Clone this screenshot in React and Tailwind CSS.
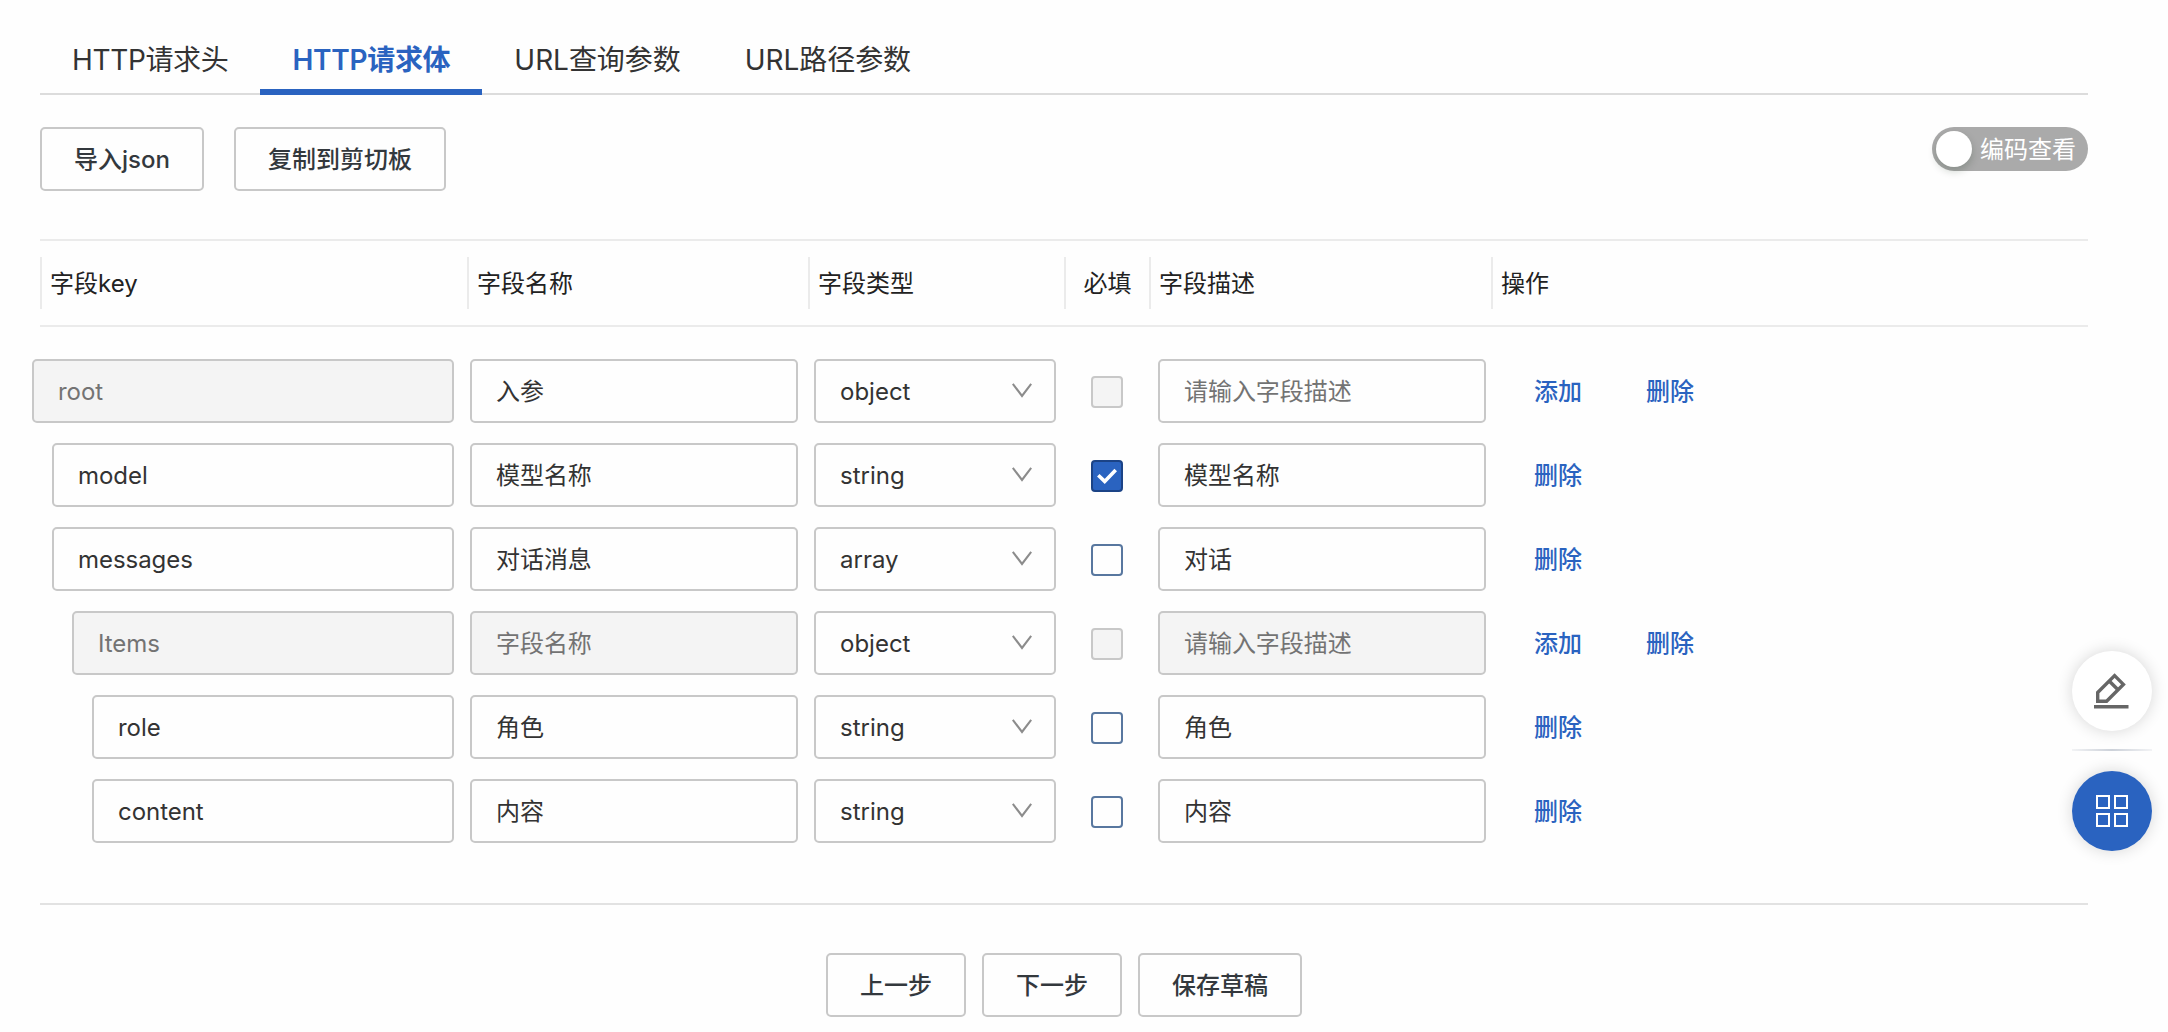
import React, { useState } from 'react';
import clsx from 'clsx';

const TABS = [
    { title: 'HTTP请求头', className: 'tracking-[-0.35px]' },
    { title: 'HTTP请求体', className: 'tracking-[-0.28px]' },
    { title: 'URL查询参数', className: 'tracking-[-0.05px]' },
    { title: 'URL路径参数', className: 'tracking-[-0.05px]' },
];

const COLUMNS = [
    { title: '字段key', className: 'w-[427px] pl-2' },
    { title: '字段名称', className: 'w-[341px] pl-2' },
    { title: '字段类型', className: 'w-[256px] pl-2' },
    { title: '必填', className: 'w-[85px] justify-center' },
    { title: '字段描述', className: 'w-[342px] pl-2' },
    { title: '操作', className: 'flex-1 pl-2' },
];

const FIELDS = [
    { id: 1, key: 'root', name: '入参', type: 'object', desc: '', level: 0, lockKey: true, lockRequired: true, canAdd: true },
    { id: 2, key: 'model', name: '模型名称', type: 'string', desc: '模型名称', level: 1, required: true },
    { id: 3, key: 'messages', name: '对话消息', type: 'array', desc: '对话', level: 1 },
    { id: 4, key: 'Items', name: '', type: 'object', desc: '', level: 2, lockKey: true, lockName: true, lockDesc: true, lockRequired: true, canAdd: true },
    { id: 5, key: 'role', name: '角色', type: 'string', desc: '角色', level: 3 },
    { id: 6, key: 'content', name: '内容', type: 'string', desc: '内容', level: 3 },
];

// each nesting level moves the key input 20px to the right
const INDENT = ['ml-0', 'ml-5', 'ml-10', 'ml-15'];

function Button({ children }) {
    return (
        <button
            type="button"
            className="h-16 px-8 pt-px border-2 border-[#c8c8c8] rounded-[5px] bg-[#fefefe] font-medium text-[#33383d]"
        >
            {children}
        </button>
    );
}

function TextInput({ value, placeholder, disabled, className, onChange }) {
    return (
        <input
            type="text"
            value={value}
            placeholder={placeholder}
            disabled={disabled}
            onChange={(e) => onChange(e.target.value)}
            className={clsx(
                'h-16 min-w-0 px-6 border-2 border-[#c8c8c8] rounded-[5px] outline-none tracking-[-0.05px] placeholder:text-[#737373] placeholder:opacity-100',
                disabled ? 'bg-[#f4f4f4] text-[#737373]' : 'bg-[#fefefe] text-[#333]',
                className,
            )}
        />
    );
}

function TypeSelect({ value }) {
    return (
        <div className="flex items-center justify-between w-[242px] h-16 pl-6 pr-[22px] border-2 border-[#c8c8c8] rounded-[5px] bg-[#fefefe] text-[#333]">
            <span className="pt-px">{value}</span>
            <svg width="20" height="15" viewBox="0 0 20 15" fill="none" className="-mt-0.5">
                <path d="M0.8 0.8L10 13L19.2 0.8" stroke="#8c8c8c" strokeWidth="2.1" />
            </svg>
        </div>
    );
}

function Checkbox({ checked, disabled, onToggle }) {
    return (
        <button
            type="button"
            disabled={disabled}
            onClick={onToggle}
            className={clsx(
                'flex items-center justify-center size-8 border-2 rounded-[4px]',
                disabled && 'bg-[#f4f4f4] border-[#c8c8c8]',
                !disabled && checked && 'bg-[#2a63c0] border-[#1b4386]',
                !disabled && !checked && 'bg-[#fefefe] border-[#58779f]',
            )}
        >
            {checked && (
                <svg width="20" height="16" viewBox="0 0 20 16" fill="none">
                    <path d="M1.3 7.2L7.7 13.4L18.7 2" stroke="#fff" strokeWidth="3.6" />
                </svg>
            )}
        </button>
    );
}

function FieldRow({ field, onUpdate }) {
    return (
        <div className="flex items-center h-16">
            <div className="flex w-[422px]">
                <TextInput
                    value={field.key}
                    disabled={field.lockKey}
                    className={clsx('flex-1', INDENT[field.level])}
                    onChange={(key) => onUpdate({ key })}
                />
            </div>
            <TextInput
                value={field.name}
                placeholder="字段名称"
                disabled={field.lockName}
                className={clsx('w-[328px] mx-4', field.name && 'pb-[3px]')}
                onChange={(name) => onUpdate({ name })}
            />
            <TypeSelect value={field.type} />
            <div className="flex justify-center w-[102px] pt-0.5">
                <Checkbox
                    checked={field.required}
                    disabled={field.lockRequired}
                    onToggle={() => onUpdate({ required: !field.required })}
                />
            </div>
            <TextInput
                value={field.desc}
                placeholder="请输入字段描述"
                disabled={field.lockDesc}
                className={clsx('w-[328px]', field.desc && 'pb-[3px]')}
                onChange={(desc) => onUpdate({ desc })}
            />
            <div className="flex gap-16 ml-12 pt-px font-medium text-[#2a63c0]">
                {field.canAdd && <button type="button">添加</button>}
                <button type="button">删除</button>
            </div>
        </div>
    );
}

function FloatingTools() {
    return (
        <div className="fixed right-4 top-[651px] flex flex-col items-center w-20">
            <button type="button" className="flex items-center justify-center size-20 rounded-full bg-white shadow-[0_0_16px_rgba(0,0,0,0.16)]">
                <svg width="36" height="36" viewBox="0 0 36 36" fill="none" stroke="#666" strokeWidth="3.4">
                    <path d="M3.7 19.5L20.6 2.6L29.4 11.4L12.6 28.2H3.7Z" />
                    <path d="M15.2 8L24 16.8" />
                    <path d="M-0.5 33.7H34.5" />
                </svg>
            </button>
            <div className="w-20 h-0.5 mt-[18px] mb-5 bg-linear-to-r from-[#f2f3f5] via-[#ccd1d9] to-[#f2f3f5]" />
            <button type="button" className="flex items-center justify-center size-20 rounded-full bg-[#2a63c0] shadow-[0_0_16px_rgba(0,0,0,0.16)]">
                <svg width="32" height="32" viewBox="0 0 32 32" fill="none" stroke="#fff" strokeWidth="2">
                    <path d="M1 1H13V13H1ZM19 1H31V13H19ZM1 19H13V31H1ZM19 19H31V31H19Z" />
                </svg>
            </button>
        </div>
    );
}

export default function App() {
    const [activeTab, setActiveTab] = useState(1);
    const [fields, setFields] = useState(FIELDS);

    const updateField = (id, patch) => {
        setFields((prev) => prev.map((f) => (f.id === id ? { ...f, ...patch } : f)));
    };

    return (
        <div className="w-full h-screen overflow-hidden bg-[#fefefe] pl-10 pr-20 font-[Inter,'Noto_Sans_CJK_SC',sans-serif] text-[24px] leading-9 text-[#222]">
            <nav className="flex h-[95px] border-b-2 border-[#dcdcdc]">
                {TABS.map((tab, i) => (
                    <button
                        key={tab.title}
                        type="button"
                        onClick={() => setActiveTab(i)}
                        className={clsx(
                            'h-[95px] px-8 pt-[30px] text-[28px] whitespace-nowrap border-b-[6px]',
                            i === activeTab ? 'border-[#2a63c0] font-semibold text-[#2a63c0]' : 'border-transparent text-[#333]',
                            tab.className,
                        )}
                    >
                        {tab.title}
                    </button>
                ))}
            </nav>

            <div className="flex items-start justify-between mt-8">
                <div className="flex gap-[30px]">
                    <Button>导入json</Button>
                    <Button>复制到剪切板</Button>
                </div>
                <button type="button" className="flex items-center w-[156px] h-11 pl-1 rounded-full bg-[#aaa] text-white">
                    <span className="size-9 mr-2 rounded-full bg-white shadow-[0_4px_8px_rgba(0,35,11,0.2)]" />
                    <span className="pt-0.5">编码查看</span>
                </button>
            </div>

            <div className="flex items-center h-[88px] mt-12 border-y-2 border-[#ebebeb]">
                {COLUMNS.map((col) => (
                    <div key={col.title} className={clsx('flex items-center h-[52px] pt-0.5 border-l-2 border-[#ebebeb]', col.className)}>
                        {col.title}
                    </div>
                ))}
            </div>

            <div className="flex flex-col gap-5 mt-8 -ml-2">
                {fields.map((field) => (
                    <FieldRow key={field.id} field={field} onUpdate={(patch) => updateField(field.id, patch)} />
                ))}
            </div>

            <div className="flex justify-center gap-4 mt-[60px] pt-12 border-t-2 border-[#e2e2e2]">
                <Button>上一步</Button>
                <Button>下一步</Button>
                <Button>保存草稿</Button>
            </div>

            <FloatingTools />
        </div>
    );
}
